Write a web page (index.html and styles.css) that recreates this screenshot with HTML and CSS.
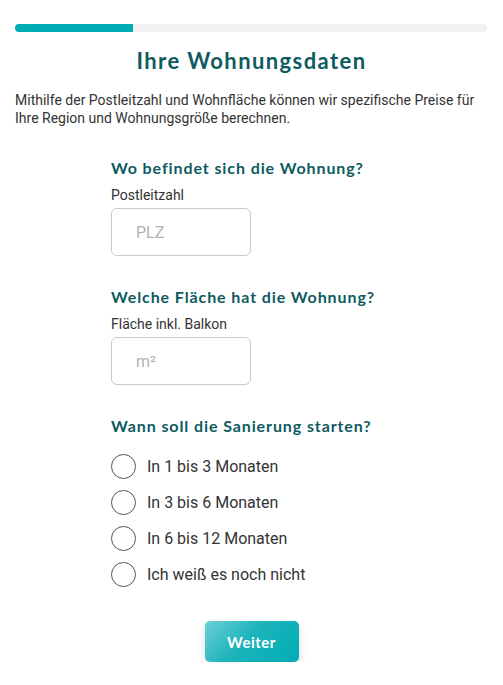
FILE: index.html
```html
<!DOCTYPE html>
<html lang="de">
<head>
<meta charset="utf-8">
<link rel="stylesheet" href="styles.css">
</head>
<body>
<div class="page">
  <div class="progress"><div class="progress-fill" style="width:25%"></div></div>
  <h1 class="title">Ihre Wohnungsdaten</h1>
  <p class="intro">Mithilfe der Postleitzahl und Wohnfläche können wir spezifische Preise für Ihre Region und Wohnungsgröße berechnen.</p>
  <form class="form">
    <section class="group">
      <h2 class="q">Wo befindet sich die Wohnung?</h2>
      <label class="label">Postleitzahl</label>
      <input class="field" type="text" placeholder="PLZ">
    </section>
    <section class="group">
      <h2 class="q">Welche Fläche hat die Wohnung?</h2>
      <label class="label">Fläche inkl. Balkon</label>
      <input class="field" type="text" placeholder="m²">
    </section>
    <section class="group">
      <h2 class="q">Wann soll die Sanierung starten?</h2>
      <div class="radios">
        <label class="radio"><span class="circle"></span>In 1 bis 3 Monaten</label>
        <label class="radio"><span class="circle"></span>In 3 bis 6 Monaten</label>
        <label class="radio"><span class="circle"></span>In 6 bis 12 Monaten</label>
        <label class="radio"><span class="circle"></span>Ich weiß es noch nicht</label>
      </div>
    </section>
  </form>
  <div class="actions"><button class="btn" type="button">Weiter</button></div>
</div>
</body>
</html>
```
FILE: styles.css
```css
* { box-sizing: border-box; }
html, body { margin: 0; padding: 0; background: #fff; }
body { font-family: Roboto, "Liberation Sans", sans-serif; color: #333; }
.page { padding: 24px 15px 0 15px; width: 503px; }
.progress { height: 8px; background: #f2f2f2; border-radius: 4px; overflow: hidden; width: 472px; }
.progress-fill { height: 100%; background: #00adb5; }
.title { font-family: Lato, "Noto Sans", sans-serif; font-weight: 700; font-size: 22px; color: #0e5b5f; text-align: center; margin: 14px 0 0 0; line-height: 30px; letter-spacing: 1.4px; }
.intro { font-size: 14px; line-height: 18px; margin: 15px 0 0 0; color: #333; }
.form { padding-left: 96px; margin-top: 30px; }
.group { margin-bottom: 30px; }
.q { font-family: Lato, "Noto Sans", sans-serif; font-weight: 700; font-size: 16px; color: #0e5b5f; margin: 0; line-height: 22px; letter-spacing: 0.9px; }
.label { display: block; font-size: 14px; line-height: 18px; margin-top: 7px; color: #333; }
.field { display: block; width: 140px; height: 48px; margin-top: 4px; border: 1px solid #c9c9c9; border-radius: 6px; padding: 0 0 0 24px; font-family: Roboto, sans-serif; font-size: 16px; color: #333; outline: none; }
.field::placeholder { color: #b3b3b3; }
.radios { display: flex; flex-direction: column; gap: 11px; margin-top: 17px; }
.radio { display: flex; align-items: center; gap: 11px; font-size: 16px; line-height: 25px; color: #333; }
.circle { width: 25px; height: 25px; border: 1.5px solid #555; border-radius: 50%; flex: none; }
.actions { display: flex; justify-content: center; margin-top: 34px; }
.btn { width: 94px; height: 41px; border: none; border-radius: 5px; background: linear-gradient(135deg, #6fd0d6 0%, #1cb3bb 45%, #00adb5 100%); color: #fff; font-family: Lato, "Noto Sans", sans-serif; font-weight: 700; font-size: 15px; box-shadow: 0 4px 8px rgba(0,0,0,0.15); letter-spacing: 0.5px; }
```
